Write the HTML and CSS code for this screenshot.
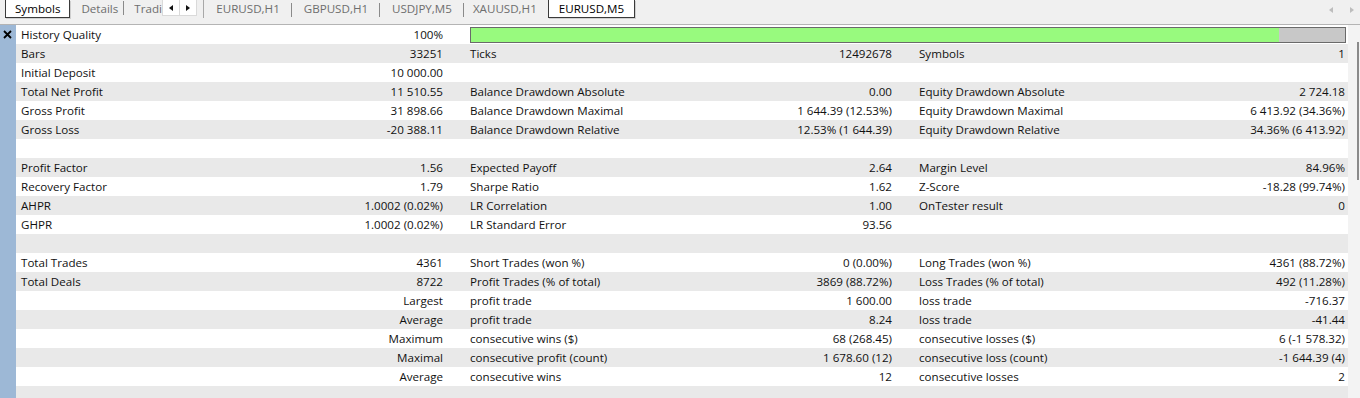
FILE: index.html
```html
<!DOCTYPE html>
<html lang="en">
<head>
  <meta charset="UTF-8">
  <title>Strategy Tester Report</title>
  <link rel="stylesheet" href="styles.css">
</head>
<body>

  <!-- Tab strip: tester tabs + chart tabs -->
  <div class="tabbar">
    <div class="tab active">Symbols</div>
    <div class="tab">Details</div>
    <span class="sep"></span>
    <div class="tab clipped">Trading</div>
    <div class="scroller">
      <span class="arrow left"></span>
      <span class="arrow right"></span>
    </div>
    <span class="sep tall"></span>
    <div class="charts">
      <div class="tab">EURUSD,H1</div>
      <span class="sep"></span>
      <div class="tab">GBPUSD,H1</div>
      <span class="sep"></span>
      <div class="tab">USDJPY,M5</div>
      <span class="sep"></span>
      <div class="tab short">XAUUSD,H1</div>
      <div class="tab active">EURUSD,M5</div>
    </div>
    <div class="nav">
      <span class="arrow left pale"></span>
      <span class="arrow right pale"></span>
    </div>
  </div>

  <div class="main">
    <!-- Side strip with close button -->
    <div class="side">
      <svg class="close" width="16" height="19" viewBox="0 0 16 19">
        <path d="M4 6 L11 13 M11 6 L4 13" stroke="#000" stroke-width="1.8"/>
      </svg>
    </div>

    <!-- Report table -->
    <div class="report">
      <div class="row">
        <div class="cell"><span>History Quality</span><span>100%</span></div>
        <div class="cell wide"><div class="quality"><div class="fill" style="width: 92.5%"></div></div></div>
      </div>
      <div class="row">
        <div class="cell"><span>Bars</span><span>33251</span></div>
        <div class="cell"><span>Ticks</span><span>12492678</span></div>
        <div class="cell last"><span>Symbols</span><span>1</span></div>
      </div>
      <div class="row">
        <div class="cell"><span>Initial Deposit</span><span>10 000.00</span></div>
      </div>
      <div class="row">
        <div class="cell"><span>Total Net Profit</span><span>11 510.55</span></div>
        <div class="cell"><span>Balance Drawdown Absolute</span><span>0.00</span></div>
        <div class="cell last"><span>Equity Drawdown Absolute</span><span>2 724.18</span></div>
      </div>
      <div class="row">
        <div class="cell"><span>Gross Profit</span><span>31 898.66</span></div>
        <div class="cell"><span>Balance Drawdown Maximal</span><span>1 644.39 (12.53%)</span></div>
        <div class="cell last"><span>Equity Drawdown Maximal</span><span>6 413.92 (34.36%)</span></div>
      </div>
      <div class="row">
        <div class="cell"><span>Gross Loss</span><span>-20 388.11</span></div>
        <div class="cell"><span>Balance Drawdown Relative</span><span>12.53% (1 644.39)</span></div>
        <div class="cell last"><span>Equity Drawdown Relative</span><span>34.36% (6 413.92)</span></div>
      </div>
      <div class="row"></div>
      <div class="row">
        <div class="cell"><span>Profit Factor</span><span>1.56</span></div>
        <div class="cell"><span>Expected Payoff</span><span>2.64</span></div>
        <div class="cell last"><span>Margin Level</span><span>84.96%</span></div>
      </div>
      <div class="row">
        <div class="cell"><span>Recovery Factor</span><span>1.79</span></div>
        <div class="cell"><span>Sharpe Ratio</span><span>1.62</span></div>
        <div class="cell last"><span>Z-Score</span><span>-18.28 (99.74%)</span></div>
      </div>
      <div class="row">
        <div class="cell"><span>AHPR</span><span>1.0002 (0.02%)</span></div>
        <div class="cell"><span>LR Correlation</span><span>1.00</span></div>
        <div class="cell last"><span>OnTester result</span><span>0</span></div>
      </div>
      <div class="row">
        <div class="cell"><span>GHPR</span><span>1.0002 (0.02%)</span></div>
        <div class="cell"><span>LR Standard Error</span><span>93.56</span></div>
      </div>
      <div class="row"></div>
      <div class="row">
        <div class="cell"><span>Total Trades</span><span>4361</span></div>
        <div class="cell"><span>Short Trades (won %)</span><span>0 (0.00%)</span></div>
        <div class="cell last"><span>Long Trades (won %)</span><span>4361 (88.72%)</span></div>
      </div>
      <div class="row">
        <div class="cell"><span>Total Deals</span><span>8722</span></div>
        <div class="cell"><span>Profit Trades (% of total)</span><span>3869 (88.72%)</span></div>
        <div class="cell last"><span>Loss Trades (% of total)</span><span>492 (11.28%)</span></div>
      </div>
      <div class="row">
        <div class="cell"><span></span><span>Largest</span></div>
        <div class="cell"><span>profit trade</span><span>1 600.00</span></div>
        <div class="cell last"><span>loss trade</span><span>-716.37</span></div>
      </div>
      <div class="row">
        <div class="cell"><span></span><span>Average</span></div>
        <div class="cell"><span>profit trade</span><span>8.24</span></div>
        <div class="cell last"><span>loss trade</span><span>-41.44</span></div>
      </div>
      <div class="row">
        <div class="cell"><span></span><span>Maximum</span></div>
        <div class="cell"><span>consecutive wins ($)</span><span>68 (268.45)</span></div>
        <div class="cell last"><span>consecutive losses ($)</span><span>6 (-1 578.32)</span></div>
      </div>
      <div class="row">
        <div class="cell"><span></span><span>Maximal</span></div>
        <div class="cell"><span>consecutive profit (count)</span><span>1 678.60 (12)</span></div>
        <div class="cell last"><span>consecutive loss (count)</span><span>-1 644.39 (4)</span></div>
      </div>
      <div class="row">
        <div class="cell"><span></span><span>Average</span></div>
        <div class="cell"><span>consecutive wins</span><span>12</span></div>
        <div class="cell last"><span>consecutive losses</span><span>2</span></div>
      </div>
      <div class="row"></div>
    </div>

    <!-- Slim scrollbar -->
    <div class="scrollbar"><div class="thumb"></div></div>
  </div>

</body>
</html>
```

FILE: styles.css
```css
/* Page base */
body {
  margin: 0;
  height: 398px;
  overflow: hidden;
  font-family: 'Open Sans', 'Noto Sans', sans-serif;
  font-size: 11.6px;
  color: #111;
  background-color: #f0f0f0;
}

/* Tab strip along the top */
.tabbar {
  display: flex;
  align-items: flex-start;
  height: 25px;
  padding-left: 5px;
  border-bottom: 1px solid #b4b4b4;
  box-sizing: border-box;
}

.tab {
  height: 18px;
  line-height: 17px;
  padding: 0 5px 0 11px;
  color: #6e6e6e;
  box-sizing: border-box;
  white-space: nowrap;
}

.tab.active {
  padding: 0 9px;
  color: #000;
  background-color: #fff;
  border: 1px solid #3a3a3a;
  border-top: none;
  box-shadow: 1px 1px 0 #cfcfcf;
}

.tab.clipped {
  width: 28px;
  overflow: hidden;
  padding: 0;
  margin-left: 10px;
}

.sep {
  width: 1px;
  height: 14px;
  margin-top: 1px;
  background-color: #8a8a8a;
}

.sep.tall {
  height: 18px;
  margin: 0 0 0 6px;
  background-color: #a8a8a8;
}

/* Small scroll buttons next to the clipped tab */
.scroller {
  display: flex;
  height: 15px;
  background-color: #fff;
  border: 1px solid #dadada;
  border-top: none;
}

.scroller .arrow {
  width: 16px;
  display: flex;
  align-items: center;
  justify-content: center;
}

.scroller .arrow + .arrow {
  border-left: 1px solid #dadada;
}

.arrow::before {
  content: '';
  border-top: 3px solid transparent;
  border-bottom: 3px solid transparent;
}

.arrow.left::before {
  border-right: 4px solid #111;
}

.arrow.right::before {
  border-left: 4px solid #111;
}

.charts {
  display: flex;
  align-items: flex-start;
}

.charts .tab {
  padding: 0 11px 0 12px;
}

.charts .tab.short {
  padding-left: 9px;
}

.charts .tab.active {
  padding: 0 10px;
}

.charts .sep {
  margin-top: 3px;
}

/* Pale chart navigation arrows at the right edge */
.nav {
  display: flex;
  gap: 14px;
  margin-left: auto;
  margin-right: 5px;
  margin-top: 6px;
}

.nav .arrow {
  width: 7px;
  height: 7px;
  display: flex;
  align-items: center;
  justify-content: center;
}

.arrow.pale.left::before {
  border-right-color: #bdbdbd;
}

.arrow.pale.right::before {
  border-left-color: #bdbdbd;
}

/* Body area */
.main {
  display: flex;
  height: 373px;
}

.side {
  width: 16px;
  flex-shrink: 0;
  background-color: #9db8d6;
}

.close {
  display: block;
}

.report {
  width: 1332px;
  background-color: #fff;
}

.row {
  display: grid;
  grid-template-columns: 449px 449px 434px;
  height: 19px;
  line-height: 19px;
  background-color: #fff;
}

.row:nth-child(even) {
  background-color: #e9e9e9;
}

.cell {
  display: flex;
  justify-content: space-between;
  padding: 0 22px 0 5px;
  white-space: nowrap;
}

.cell.last {
  padding-right: 3px;
}

.cell.wide {
  grid-column: span 2;
  align-items: center;
  padding-right: 2px;
}

/* History quality bar */
.quality {
  flex: 1;
  height: 14px;
  border: 1px solid #6a6a6a;
  background-color: #c8c8c8;
}

.quality .fill {
  height: 100%;
  background-color: #98fa7e;
}

.scrollbar {
  flex: 1;
  position: relative;
  background-color: #f3f3f3;
}

.thumb {
  position: absolute;
  left: 9px;
  top: 17px;
  width: 2px;
  height: 138px;
  background-color: #8a8a8a;
}
```
